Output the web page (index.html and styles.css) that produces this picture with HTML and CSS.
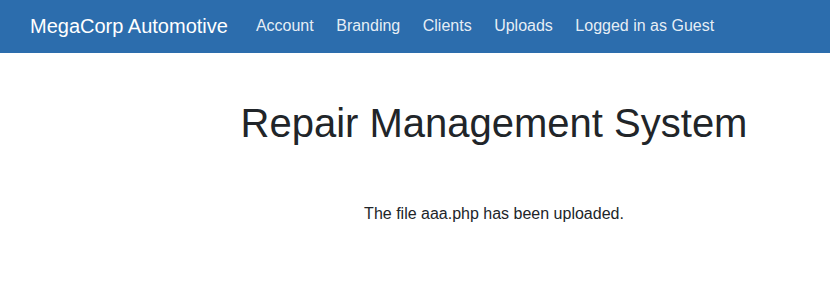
FILE: index.html
```html
<!DOCTYPE html>
<html lang="en">
<head>
    <meta charset="UTF-8">
    <title>Repair Management System</title>
    <link rel="stylesheet" href="styles.css">
</head>
<body>
    <nav class="navbar">
        <a class="brand" href="#">MegaCorp Automotive</a>
        <ul class="nav-links">
            <li><a href="#">Account</a></li>
            <li><a href="#">Branding</a></li>
            <li><a href="#">Clients</a></li>
            <li><a href="#">Uploads</a></li>
            <li><a href="#">Logged in as Guest</a></li>
        </ul>
    </nav>

    <main class="content">
        <h1>Repair Management System</h1>
        <p class="message">The file aaa.php has been uploaded.</p>
    </main>
</body>
</html>
```

FILE: styles.css
```css
body {
    margin: 0;
    font-family: "Liberation Sans", Arial, sans-serif;
    font-size: 16px;
    color: #212529;
    background: #fff;
}
a {
    text-decoration: none;
}
.navbar {
    display: flex;
    align-items: center;
    height: 53px;
    padding: 0 30px;
    background: #2c6dad;
}
.brand {
    font-size: 20px;
    color: #fff;
    margin-right: 28px;
}
.nav-links {
    display: flex;
    gap: 22.5px;
    list-style: none;
    margin: -1px 0 0;
    padding: 0;
}
.nav-links a {
    color: rgba(255, 255, 255, 0.9);
    font-size: 16px;
}
.content {
    padding-left: 158px;
    text-align: center;
}
h1 {
    font-size: 40px;
    font-weight: 400;
    line-height: 1.2;
    margin: 46px 0 0;
}
.message {
    margin: 55px 0 0;
    line-height: 1.5;
}
```
